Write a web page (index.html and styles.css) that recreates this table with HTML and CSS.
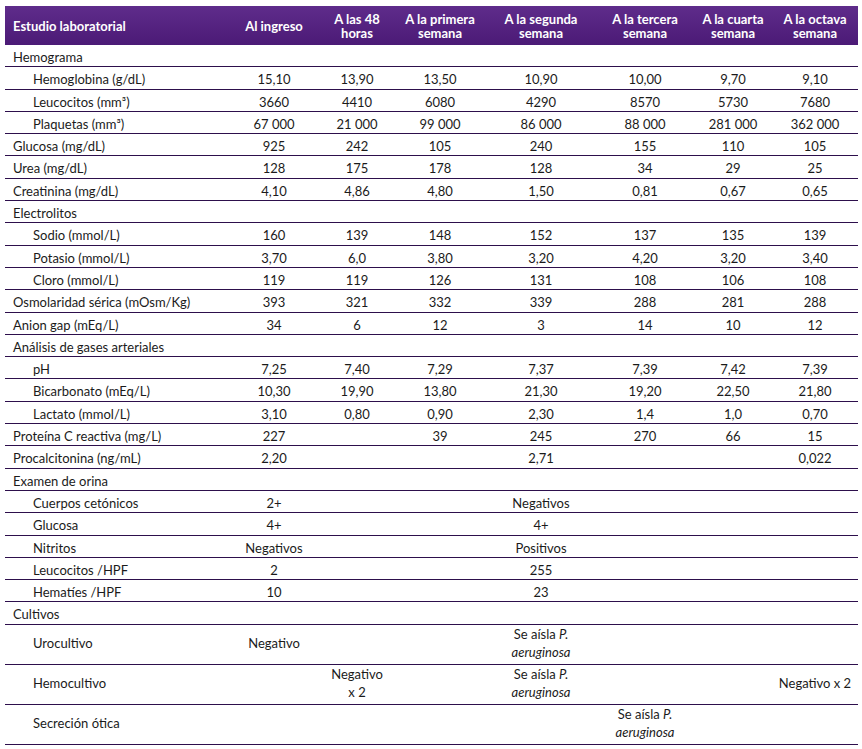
FILE: index.html
```html
<!DOCTYPE html>
<html lang="es">
<head>
<meta charset="utf-8">
<title>Estudio laboratorial</title>
<link rel="stylesheet" href="styles.css">
</head>
<body>
<div class="wrap">
<table class="lab">
  <colgroup>
    <col class="c-label"><col class="c1"><col class="c2"><col class="c3"><col class="c4"><col class="c5"><col class="c6"><col class="c7">
  </colgroup>
  <thead>
    <tr>
      <th class="h-label">Estudio laboratorial</th>
      <th>Al ingreso</th>
      <th>A las 48 horas</th>
      <th>A la primera semana</th>
      <th>A la segunda semana</th>
      <th>A la tercera semana</th>
      <th>A la cuarta semana</th>
      <th>A la octava semana</th>
    </tr>
  </thead>
  <tbody>
    <tr><td class="sec">Hemograma</td><td></td><td></td><td></td><td></td><td></td><td></td><td></td></tr>
    <tr><td class="sub">Hemoglobina (g/dL)</td><td>15,10</td><td>13,90</td><td>13,50</td><td>10,90</td><td>10,00</td><td>9,70</td><td>9,10</td></tr>
    <tr><td class="sub">Leucocitos (mm³)</td><td>3660</td><td>4410</td><td>6080</td><td>4290</td><td>8570</td><td>5730</td><td>7680</td></tr>
    <tr><td class="sub">Plaquetas (mm³)</td><td>67 000</td><td>21 000</td><td>99 000</td><td>86 000</td><td>88 000</td><td>281 000</td><td>362 000</td></tr>
    <tr><td class="sec">Glucosa (mg/dL)</td><td>925</td><td>242</td><td>105</td><td>240</td><td>155</td><td>110</td><td>105</td></tr>
    <tr><td class="sec">Urea (mg/dL)</td><td>128</td><td>175</td><td>178</td><td>128</td><td>34</td><td>29</td><td>25</td></tr>
    <tr><td class="sec">Creatinina (mg/dL)</td><td>4,10</td><td>4,86</td><td>4,80</td><td>1,50</td><td>0,81</td><td>0,67</td><td>0,65</td></tr>
    <tr><td class="sec">Electrolitos</td><td></td><td></td><td></td><td></td><td></td><td></td><td></td></tr>
    <tr><td class="sub">Sodio (mmol/L)</td><td>160</td><td>139</td><td>148</td><td>152</td><td>137</td><td>135</td><td>139</td></tr>
    <tr><td class="sub">Potasio (mmol/L)</td><td>3,70</td><td>6,0</td><td>3,80</td><td>3,20</td><td>4,20</td><td>3,20</td><td>3,40</td></tr>
    <tr><td class="sub">Cloro (mmol/L)</td><td>119</td><td>119</td><td>126</td><td>131</td><td>108</td><td>106</td><td>108</td></tr>
    <tr><td class="sec">Osmolaridad sérica (mOsm/Kg)</td><td>393</td><td>321</td><td>332</td><td>339</td><td>288</td><td>281</td><td>288</td></tr>
    <tr><td class="sec">Anion gap (mEq/L)</td><td>34</td><td>6</td><td>12</td><td>3</td><td>14</td><td>10</td><td>12</td></tr>
    <tr><td class="sec">Análisis de gases arteriales</td><td></td><td></td><td></td><td></td><td></td><td></td><td></td></tr>
    <tr><td class="sub">pH</td><td>7,25</td><td>7,40</td><td>7,29</td><td>7,37</td><td>7,39</td><td>7,42</td><td>7,39</td></tr>
    <tr><td class="sub">Bicarbonato (mEq/L)</td><td>10,30</td><td>19,90</td><td>13,80</td><td>21,30</td><td>19,20</td><td>22,50</td><td>21,80</td></tr>
    <tr><td class="sub">Lactato (mmol/L)</td><td>3,10</td><td>0,80</td><td>0,90</td><td>2,30</td><td>1,4</td><td>1,0</td><td>0,70</td></tr>
    <tr><td class="sec">Proteína C reactiva (mg/L)</td><td>227</td><td></td><td>39</td><td>245</td><td>270</td><td>66</td><td>15</td></tr>
    <tr><td class="sec">Procalcitonina (ng/mL)</td><td>2,20</td><td></td><td></td><td>2,71</td><td></td><td></td><td>0,022</td></tr>
    <tr><td class="sec">Examen de orina</td><td></td><td></td><td></td><td></td><td></td><td></td><td></td></tr>
    <tr><td class="sub">Cuerpos cetónicos</td><td>2+</td><td></td><td></td><td>Negativos</td><td></td><td></td><td></td></tr>
    <tr><td class="sub">Glucosa</td><td>4+</td><td></td><td></td><td>4+</td><td></td><td></td><td></td></tr>
    <tr><td class="sub">Nitritos</td><td>Negativos</td><td></td><td></td><td>Positivos</td><td></td><td></td><td></td></tr>
    <tr><td class="sub">Leucocitos /HPF</td><td>2</td><td></td><td></td><td>255</td><td></td><td></td><td></td></tr>
    <tr><td class="sub">Hematíes /HPF</td><td>10</td><td></td><td></td><td>23</td><td></td><td></td><td></td></tr>
    <tr><td class="sec">Cultivos</td><td></td><td></td><td></td><td></td><td></td><td></td><td></td></tr>
    <tr class="tall"><td class="sub">Urocultivo</td><td>Negativo</td><td></td><td></td><td>Se aísla <i>P.</i><br><i>aeruginosa</i></td><td></td><td></td><td></td></tr>
    <tr class="tall"><td class="sub">Hemocultivo</td><td></td><td>Negativo<br>x&nbsp;2</td><td></td><td>Se aísla <i>P.</i><br><i>aeruginosa</i></td><td></td><td></td><td>Negativo x&nbsp;2</td></tr>
    <tr class="tall"><td class="sub">Secreción ótica</td><td></td><td></td><td></td><td></td><td>Se aísla <i>P.</i><br><i>aeruginosa</i></td><td></td><td></td></tr>
  </tbody>
</table>
</div>
</body>
</html>
```

FILE: styles.css
```css
html, body {
  margin: 0;
  padding: 0;
  background: #ffffff;
}

.wrap {
  padding: 6px 4px 0 5px;
}

.lab {
  width: 853px;
  border-collapse: collapse;
  table-layout: fixed;
  font-family: Lato, "Open Sans", sans-serif;
  font-size: 13px;
  color: #1b1b1b;
}

.c-label { width: 223px; }
.c1 { width: 92px; }
.c2 { width: 74px; }
.c3 { width: 92px; }
.c4 { width: 110px; }
.c5 { width: 98px; }
.c6 { width: 78px; }
.c7 { width: 86px; }

.lab thead tr {
  background: linear-gradient(to bottom, #5f2c8b 0%, #4b1a76 100%);
}

.lab th {
  color: #ffffff;
  font-weight: 700;
  font-size: 13px;
  line-height: 14px;
  text-align: center;
  vertical-align: middle;
  padding: 5px 4px 5px;
  height: 29px;
}

.lab th.h-label {
  text-align: left;
  padding-left: 8px;
}

.lab td {
  text-align: center;
  vertical-align: middle;
  line-height: 16.3px;
  padding: 4px 4px 1px;
  border-bottom: 1px solid #2d0f4c;
}

.lab td.sec {
  text-align: left;
  padding-left: 8px;
}

.lab td.sub {
  text-align: left;
  padding-left: 28px;
}

.lab tr.tall td {
  line-height: 17.8px;
  padding-top: 1.7px;
  padding-bottom: 1.7px;
}
```
